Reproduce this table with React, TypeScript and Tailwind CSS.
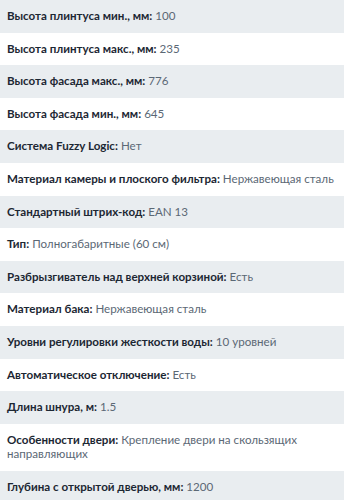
const specs: [string, string][] = [
  ['Высота плинтуса мин., мм', '100'],
  ['Высота плинтуса макс., мм', '235'],
  ['Высота фасада макс., мм', '776'],
  ['Высота фасада мин., мм', '645'],
  ['Система Fuzzy Logic', 'Нет'],
  ['Материал камеры и плоского фильтра', 'Нержавеющая сталь'],
  ['Стандартный штрих-код', 'EAN 13'],
  ['Тип', 'Полногабаритные (60 см)'],
  ['Разбрызгиватель над верхней корзиной', 'Есть'],
  ['Материал бака', 'Нержавеющая сталь'],
  ['Уровни регулировки жесткости воды', '10 уровней'],
  ['Автоматическое отключение', 'Есть'],
  ['Длина шнура, м', '1.5'],
  ['Особенности двери', 'Крепление двери на скользящих направляющих'],
  ['Глубина с открытой дверью, мм', '1200'],
];

export default function App() {
  return (
    <div className="w-[344px] h-[500px] overflow-hidden bg-white font-['Lato',sans-serif]">
      <ul>
        {specs.map(([label, value], i) => (
          <li
            key={label}
            className={`pl-[7px] pr-[5px] py-[9px] text-[11.6px] leading-[14.6px] ${i % 2 === 0 ? 'bg-[#e9edf0]' : 'bg-white'}`}
          >
            <span className="font-bold text-[#1c2733]">{label}:</span>{' '}
            <span className="text-[#5b6875]">{value}</span>
          </li>
        ))}
      </ul>
    </div>
  );
}
